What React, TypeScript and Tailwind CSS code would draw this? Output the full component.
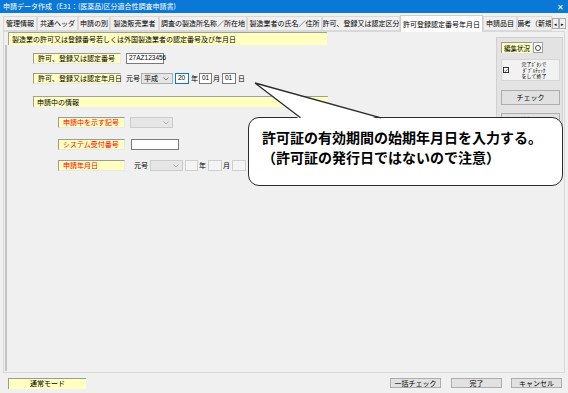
import React from 'react';

type Tab = { label: string; w: number; active?: boolean };

const tabs: Tab[] = [
  { label: '管理情報', w: 34 },
  { label: '共通ヘッダ', w: 41 },
  { label: '申請の別', w: 32 },
  { label: '製造販売業者', w: 49 },
  { label: '調査の製造所名称／所在地', w: 88 },
  { label: '製造業者の氏名／住所', w: 75 },
  { label: '許可、登録又は認定区分', w: 78 },
  { label: '許可登録認定番号年月日', w: 83, active: true },
  { label: '申請品目', w: 34 },
  { label: '備考（新規', w: 35 },
];

const Label: React.FC<{ text: string; w: number; red?: boolean }> = ({ text, w, red }) => (
  <div
    className={`h-[11px] shrink-0 bg-[#ffffc0] border-l border-t border-[#9a9a9a] border-r border-b border-r-[#e8e8e8] border-b-[#e8e8e8] flex items-center pl-[4px] text-[7px] leading-none whitespace-nowrap ${
      red ? 'text-[#ff0000]' : 'text-black'
    }`}
    style={{ width: w }}
  >
    {text}
  </div>
);

const Box: React.FC<{ w: number; value?: string; focus?: boolean; gray?: boolean }> = ({ w, value, focus, gray }) => (
  <div
    className={`h-[11px] shrink-0 border flex items-center pl-[2px] text-[6.5px] leading-none font-['Liberation_Sans',sans-serif] ${
      focus ? 'border-[#0078d7] bg-white' : gray ? 'border-[#cfcfcf] bg-[#f4f4f4]' : 'border-[#7a7a7a] bg-white'
    }`}
    style={{ width: w }}
  >
    {value}
  </div>
);

const Select: React.FC<{ w: number; value?: string; disabled?: boolean }> = ({ w, value, disabled }) => (
  <div
    className={`h-[11px] shrink-0 border flex items-center justify-between px-[2px] text-[7px] leading-none ${
      disabled ? 'border-[#cccccc] bg-[#e6e6e6] text-[#888]' : 'border-[#adadad] bg-[#e5e5e5] text-black'
    }`}
    style={{ width: w }}
  >
    <span>{value}</span>
    <svg width="6" height="4" viewBox="0 0 6 4" className="mr-[1px]">
      <polyline points="0.5,0.5 3,3 5.5,0.5" fill="none" stroke={disabled ? '#a0a0a0' : '#555'} strokeWidth="0.8" />
    </svg>
  </div>
);

const Btn: React.FC<{ text: string; w: number; h: number; className?: string }> = ({ text, w, h, className }) => (
  <div
    className={`shrink-0 border border-[#adadad] bg-[#e1e1e1] flex items-center justify-center text-[7px] leading-none text-black ${className ?? ''}`}
    style={{ width: w, height: h }}
  >
    {text}
  </div>
);

export default function App() {
  return (
    <div className="relative w-[568px] h-[393px] bg-[#f0f0f0] overflow-hidden font-['Noto_Sans_CJK_JP',sans-serif] text-black flex flex-col">
      {/* title bar */}
      <div className="h-[13px] bg-[#0a78d7] flex items-center justify-between px-[3px] text-white text-[7px] leading-none">
        <span>申請データ作成（E31：(医薬品)区分適合性調査申請書)</span>
        <span className="text-[8px] mr-[1px]">✕</span>
      </div>

      {/* tabs */}
      <div className="h-[18px] flex items-end pl-[3px]">
        {tabs.map((t) => (
          <div
            key={t.label}
            className={`shrink-0 flex items-center justify-center text-[7px] leading-none whitespace-nowrap overflow-hidden border-t border-l border-r ${
              t.active
                ? 'h-[17px] bg-white border-[#d0d0d0] relative top-[1px] z-10'
                : 'h-[15px] bg-[#f0f0f0] border-[#d9d9d9] border-b border-b-[#d9d9d9]'
            }`}
            style={{ width: t.w }}
          >
            {t.label}
          </div>
        ))}
        <div className="h-[11px] mb-[2px] flex">
          <div className="w-[7px] h-[11px] border border-[#adadad] bg-[#f0f0f0] flex items-center justify-center text-[5px]">◂</div>
          <div className="w-[7px] h-[11px] border border-[#adadad] bg-[#f0f0f0] flex items-center justify-center text-[5px]">▸</div>
        </div>
      </div>

      {/* tab page */}
      <div className="ml-[3px] w-[562px] h-[342px] border border-[#d9d9d9] flex">
        <div className="flex-1 flex flex-col">
          <div className="ml-[4px] w-[319px] h-[13px] bg-[#ffffc0] border-t border-l border-[#a0a0a0] flex items-center pl-[3px] text-[7px] leading-none">
            製造業の許可又は登録番号若しくは外国製造業者の認定番号及び年月日
          </div>
          <div className="ml-[1px] flex-1 mb-[1px] border-l-2 border-[#c4c4c4] flex flex-col pl-[26px]">
            <div className="mt-[8px] flex items-center">
              <Label text="許可、登録又は認定番号" w={88} />
              <div className="ml-[5px]">
                <Box w={38} value="27AZ123456" />
              </div>
            </div>

            <div className="mt-[9px] flex items-center text-[7px] leading-none">
              <Label text="許可、登録又は認定年月日" w={88} />
              <span className="ml-[5px] w-[15px]">元号</span>
              <Select w={32} value="平成" />
              <div className="ml-[2px]">
                <Box w={14} value="20" focus />
              </div>
              <span className="ml-[2px] w-[8px]">年</span>
              <Box w={13} value="01" />
              <span className="ml-[1px] w-[9px]">月</span>
              <Box w={14} value="01" />
              <span className="ml-[2px]">日</span>
            </div>

            <div className="mt-[12px] w-[295px] h-[11px] bg-[#ffffc0] border-t border-l border-[#a0a0a0] flex items-center pl-[3px] text-[7px] leading-none">
              申請中の情報
            </div>

            <div className="mt-[10px] ml-[25px] flex items-center">
              <Label text="申請中を示す記号" w={67} red />
              <div className="ml-[5px]">
                <Select w={43} disabled />
              </div>
            </div>

            <div className="mt-[11px] ml-[25px] flex items-center">
              <Label text="システム受付番号" w={67} red />
              <div className="ml-[6px]">
                <Box w={48} />
              </div>
            </div>

            <div className="mt-[10px] ml-[25px] flex items-center text-[7px] leading-none">
              <Label text="申請年月日" w={67} red />
              <span className="ml-[9px] w-[16px]">元号</span>
              <Select w={33} disabled />
              <div className="ml-[2px]">
                <Box w={13} gray />
              </div>
              <span className="ml-[1px] w-[9px]">年</span>
              <Box w={14} gray />
              <span className="ml-[1px] w-[9px]">月</span>
              <Box w={14} gray />
            </div>
          </div>
        </div>

        {/* right side panel */}
        <div className="w-[67px] mr-[1px] mt-[5px] h-[130px] bg-[#e3e3e3] border border-[#d0d0d0] flex flex-col pl-[4px]">
          <div className="mt-[4px] flex items-center">
            <div className="w-[31px] h-[11px] bg-[#ffffc0] border-t border-l border-[#9a9a9a] flex items-center justify-center text-[6.5px] leading-none">
              編集状況
            </div>
            <div className="w-[10px] h-[11px] ml-[1px] bg-white border border-[#a0a0a0] flex items-center justify-center">
              <div className="w-[6px] h-[6px] rounded-full border border-[#444]" />
            </div>
          </div>
          <div className="mt-[6px] w-[59px] h-[22px] bg-[#f2f2f2] border border-[#d6d6d6] flex items-center">
            <div className="ml-[1px] w-[6px] h-[6px] border border-[#333] bg-white flex items-center justify-center">
              <svg width="5" height="5" viewBox="0 0 5 5">
                <polyline points="0.8,2.5 2,3.8 4.3,1" fill="none" stroke="#222" strokeWidth="0.8" />
              </svg>
            </div>
            <div className="flex-1 flex flex-col items-center text-[5px] leading-[6px] whitespace-nowrap">
              <span>完了ﾎﾞﾀﾝで</span>
              <span>ﾀﾞﾌﾞﾙﾁｪｯｸ</span>
              <span>をして終了</span>
            </div>
          </div>
          <Btn text="チェック" w={59} h={15} className="mt-[9px]" />
          <Btn text="編集状況を戻す" w={59} h={15} className="mt-[8px]" />
        </div>
      </div>

      {/* status bar */}
      <div className="h-[20px] flex items-center">
        <div className="ml-[8px] w-[78px] h-[11px] bg-[#ffffc0] border-t border-l border-[#9a9a9a] flex items-center justify-center text-[7px] leading-none">
          通常モード
        </div>
        <Btn text="一括チェック" w={51} h={10} className="ml-auto" />
        <Btn text="完了" w={51} h={10} className="ml-[10px]" />
        <Btn text="キャンセル" w={51} h={10} className="ml-[9px] mr-[6px]" />
      </div>

      {/* callout */}
      <div className="absolute left-[248px] top-[117px] w-[315px] h-[69px] bg-white border-[1.5px] border-[#2b2b2b] rounded-[11px] pl-[13px] pt-[9px] text-[14px] font-bold leading-[20px] text-black whitespace-nowrap">
        <div>許可証の有効期間の始期年月日を入力する。</div>
        <div>（許可証の発行日ではないので注意）</div>
      </div>
      <svg className="absolute left-0 top-0 pointer-events-none" width="568" height="393" viewBox="0 0 568 393">
        <polygon points="300,119.5 255,83 381,119.5" fill="white" />
        <polyline points="300.5,117.8 255,83 381,117.8" fill="none" stroke="#2b2b2b" strokeWidth="1.3" />
      </svg>
    </div>
  );
}
